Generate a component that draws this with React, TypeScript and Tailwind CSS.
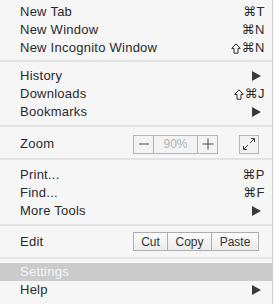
import React from 'react';

type Item = { label: string; shortcut?: string; shift?: boolean; submenu?: boolean };

const Arrow = () => (
  <svg width="9" height="10" viewBox="0 0 9 10" className="text-[#3a3a3a]">
    <path d="M0 0 L9 5 L0 10 Z" fill="currentColor" />
  </svg>
);

// hollow shift glyph, the font one is too thin
const Shift = () => (
  <svg width="10" height="11" viewBox="0 0 10 11" className="mr-[1px]">
    <path d="M5 0.8 L9.3 5.4 H7 V10.2 H3 V5.4 H0.7 Z" fill="none" stroke="#2a2a2a" strokeWidth="1" strokeLinejoin="round" />
  </svg>
);

const Row = ({ label, shortcut, shift, submenu, active }: Item & { active?: boolean }) => (
  <div
    className={`flex h-[18px] items-center justify-between pl-[20px] pr-[7px] ${
      active ? 'bg-[#cbcbcb] text-[#f4f6fb]' : 'text-[#2a2a2a]'
    }`}
  >
    <span>{label}</span>
    {shortcut && (
      <span className="flex items-center tracking-[0.5px]">
        {shift && <Shift />}
        {shortcut}
      </span>
    )}
    {submenu && (
      <span className="pr-[4px]">
        <Arrow />
      </span>
    )}
  </div>
);

// margins differ a bit between separators in the original menu
const Separator = ({ top, bottom }: { top: string; bottom: string }) => (
  <div className={`${top} ${bottom} h-[2px] bg-[#e3e3e3]`} />
);

const Group = ({ items }: { items: Item[] }) => (
  <div>
    {items.map((it) => (
      <Row key={it.label} {...it} />
    ))}
  </div>
);

export default function App() {
  return (
    <div
      className="w-[275px] h-[304px] overflow-hidden bg-white"
      style={{ fontFamily: '"Liberation Sans", "DejaVu Sans", sans-serif' }}
    >
      <div className="h-full w-[273px] border-r border-[#cdcdcd] bg-[#f6f6f6] pt-[3px] text-[13px] tracking-[0.25px]">
        <Group
          items={[
            { label: 'New Tab', shortcut: '⌘T' },
            { label: 'New Window', shortcut: '⌘N' },
            { label: 'New Incognito Window', shortcut: '⌘N', shift: true },
          ]}
        />
        <Separator top="mt-[3px]" bottom="mb-[5px]" />
        <Group
          items={[
            { label: 'History', submenu: true },
            { label: 'Downloads', shortcut: '⌘J', shift: true },
            { label: 'Bookmarks', submenu: true },
          ]}
        />
        <Separator top="mt-[4px]" bottom="mb-[6px]" />
        {/* zoom */}
        <div className="flex h-[22px] items-center pl-[20px] pr-[13px] text-[#2a2a2a]">
          <span className="flex-1">Zoom</span>
          <div className="flex h-[19px] border border-[#b4b4b4] bg-[#f3f3f3]">
            <div className="flex w-[20px] items-center justify-center border-r border-[#b4b4b4]">
              <svg width="12" height="12" viewBox="0 0 12 12">
                <path d="M1 6 H11" stroke="#4a4a4a" strokeWidth="1" />
              </svg>
            </div>
            <div className="flex w-[43px] items-center justify-center text-[12px] tracking-normal text-[#b5b5b5]">90%</div>
            <div className="flex w-[20px] items-center justify-center border-l border-[#b4b4b4]">
              <svg width="12" height="12" viewBox="0 0 12 12">
                <path d="M0.5 6 H11.5 M6 0.5 V11.5" stroke="#4a4a4a" strokeWidth="1" />
              </svg>
            </div>
          </div>
          <div className="ml-[21px] flex h-[19px] w-[20px] items-center justify-center border border-[#b4b4b4] bg-[#f3f3f3]">
            <svg width="14" height="14" viewBox="0 0 14 14" fill="none" stroke="#3a3a3a" strokeWidth="1">
              <path d="M8 6 L12 2 M9 1.5 H12.5 V5" />
              <path d="M6 8 L2 12 M5 12.5 H1.5 V9" />
            </svg>
          </div>
        </div>
        <Separator top="mt-[3px]" bottom="mb-[6px]" />
        <Group
          items={[
            { label: 'Print...', shortcut: '⌘P' },
            { label: 'Find...', shortcut: '⌘F' },
            { label: 'More Tools', submenu: true },
          ]}
        />
        <Separator top="mt-[4px]" bottom="mb-[5px]" />
        {/* edit */}
        <div className="flex h-[21px] items-center pl-[20px] pr-[13px] text-[#2a2a2a]">
          <span className="flex-1">Edit</span>
          <div className="flex h-[19px] border border-[#adadad] bg-gradient-to-b from-[#fbfbfb] to-[#ececec] text-[12px] tracking-normal text-[#333]">
            <div className="flex w-[34px] items-center justify-center border-r border-[#adadad]">Cut</div>
            <div className="flex w-[44px] items-center justify-center border-r border-[#adadad]">Copy</div>
            <div className="flex w-[46px] items-center justify-center">Paste</div>
          </div>
        </div>
        <Separator top="mt-[5px]" bottom="mb-[4px]" />
        <Row label="Settings" active />
        <Row label="Help" submenu />
      </div>
    </div>
  );
}
